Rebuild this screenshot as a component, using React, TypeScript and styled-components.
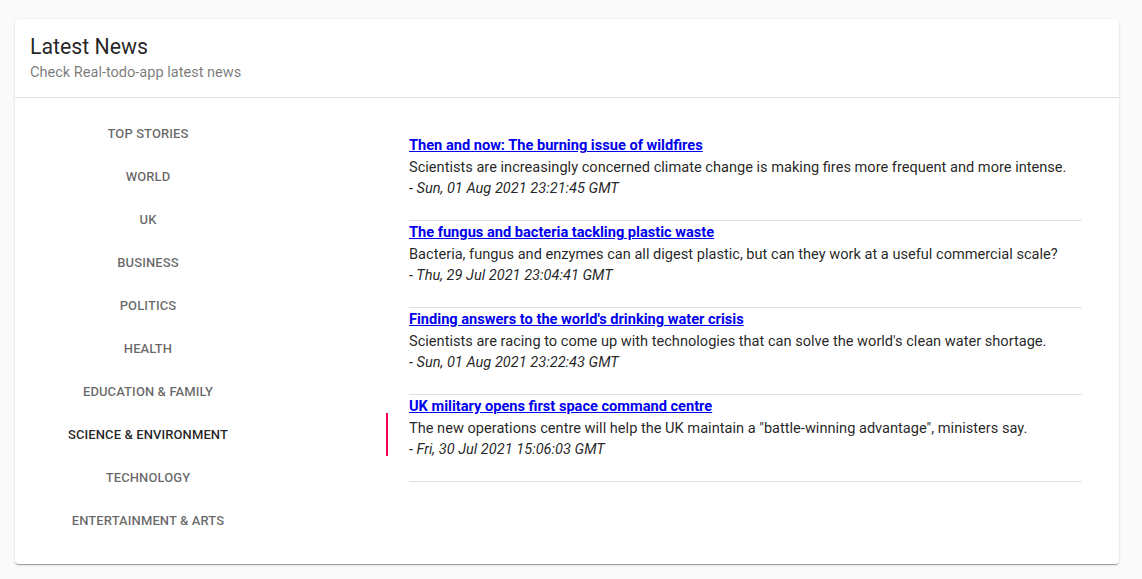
import React from "react";
import styled, { createGlobalStyle } from "styled-components";

const GlobalStyle = createGlobalStyle`
  html, body {
    margin: 0;
    padding: 0;
    background: #fafafa;
    font-family: Roboto, "Noto Sans", Arial, sans-serif;
  }
`;

const Page = styled.div`
  padding: 19px 23px 15px 15px;
`;

const Card = styled.section`
  background: #fff;
  border-radius: 4px;
  box-shadow: 0px 2px 1px -1px rgba(0, 0, 0, 0.2), 0px 1px 1px 0px rgba(0, 0, 0, 0.14),
    0px 1px 3px 0px rgba(0, 0, 0, 0.12);
  overflow: hidden;
`;

const Header = styled.header`
  padding: 12px 15px 14px;
  border-bottom: 1px solid #e0e0e0;
`;

const Title = styled.h1`
  margin: 0;
  font-size: 21.3px;
  font-weight: 400;
  line-height: 32px;
  color: rgba(0, 0, 0, 0.87);
`;

const Subtitle = styled.p`
  margin: 0;
  font-size: 14.55px;
  line-height: 20px;
  color: rgba(0, 0, 0, 0.54);
`;

const Body = styled.div`
  display: flex;
`;

const Nav = styled.nav`
  width: 373px;
  flex: none;
  display: flex;
  flex-direction: column;
  padding: 14px 0 22px;
`;

const Tab = styled.button<{ $active?: boolean }>`
  position: relative;
  height: 43px;
  border: 0;
  background: none;
  padding: 0 107px 0 0;
  font-family: Roboto, "Noto Sans", Arial, sans-serif;
  font-size: 13px;
  font-weight: 500;
  letter-spacing: 0.1px;
  text-transform: uppercase;
  text-align: center;
  color: ${(p) => (p.$active ? "rgba(0,0,0,0.87)" : "rgba(0,0,0,0.6)")};
  cursor: pointer;
`;

const Indicator = styled.span`
  position: absolute;
  right: 0;
  top: 0;
  bottom: 0;
  width: 2px;
  background: #f50057;
`;

const Content = styled.div`
  flex: 1;
  padding: 36px 37px 0 21px;
`;

const Item = styled.article`
  padding: 1px 0 20.5px;
  border-bottom: 1px solid #e0e0e0;
  font-size: 14.6px;
  line-height: 21.5px;
  color: rgba(0, 0, 0, 0.87);
`;

const Link = styled.a`
  display: block;
  font-weight: 700;
  color: #0000ee;
  text-decoration: underline;
`;

const Desc = styled.p`
  margin: 0;
`;

const Date = styled.p`
  margin: 0;
  font-style: italic;
`;

const tabs = [
  "Top Stories",
  "World",
  "UK",
  "Business",
  "Politics",
  "Health",
  "Education & Family",
  "Science & Environment",
  "Technology",
  "Entertainment & Arts",
];

const news = [
  {
    title: "Then and now: The burning issue of wildfires",
    desc: "Scientists are increasingly concerned climate change is making fires more frequent and more intense.",
    date: "- Sun, 01 Aug 2021 23:21:45 GMT",
  },
  {
    title: "The fungus and bacteria tackling plastic waste",
    desc: "Bacteria, fungus and enzymes can all digest plastic, but can they work at a useful commercial scale?",
    date: "- Thu, 29 Jul 2021 23:04:41 GMT",
  },
  {
    title: "Finding answers to the world's drinking water crisis",
    desc: "Scientists are racing to come up with technologies that can solve the world's clean water shortage.",
    date: "- Sun, 01 Aug 2021 23:22:43 GMT",
  },
  {
    title: "UK military opens first space command centre",
    desc: 'The new operations centre will help the UK maintain a "battle-winning advantage", ministers say.',
    date: "- Fri, 30 Jul 2021 15:06:03 GMT",
  },
];

export default function App() {
  const active = 7;
  return (
    <Page>
      <GlobalStyle />
      <Card>
        <Header>
          <Title>Latest News</Title>
          <Subtitle>Check Real-todo-app latest news</Subtitle>
        </Header>
        <Body>
          <Nav>
            {tabs.map((t, i) => (
              <Tab key={t} $active={i === active}>
                {t}
                {i === active && <Indicator />}
              </Tab>
            ))}
          </Nav>
          <Content>
            {news.map((n) => (
              <Item key={n.title}>
                <Link href="#">{n.title}</Link>
                <Desc>{n.desc}</Desc>
                <Date>{n.date}</Date>
              </Item>
            ))}
          </Content>
        </Body>
      </Card>
    </Page>
  );
}
